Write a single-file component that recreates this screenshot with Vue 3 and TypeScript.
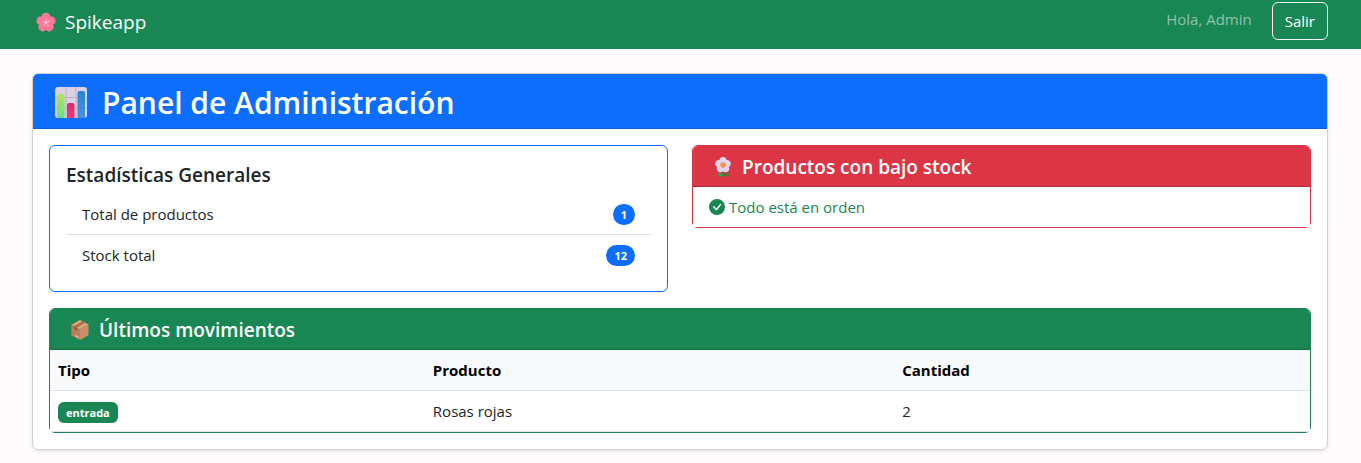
<script setup lang="ts">
interface Stat {
  label: string
  value: number
}

interface Movement {
  type: string
  product: string
  quantity: number
}

const stats: Stat[] = [
  { label: 'Total de productos', value: 1 },
  { label: 'Stock total', value: 12 },
]

const movements: Movement[] = [{ type: 'entrada', product: 'Rosas rojas', quantity: 2 }]

const petals: number[] = [0, 72, 144, 216, 288]
</script>

<template>
  <div class="page">
    <nav class="navbar">
      <a class="brand" href="#">
        <svg class="brand-icon" viewBox="0 0 20 20" aria-hidden="true">
          <g v-for="angle in petals" :key="angle" :transform="`rotate(${angle} 10 10.5)`">
            <path
              d="M10 11C6.500 9 5 5.500 6 3.200C6.800 1.300 8.500 0.600 9.400 0.800L10 1.400L10.600 0.800C11.500 0.600 13.200 1.300 14 3.200C15 5.500 13.500 9 10 11Z"
              fill="#ff7896"
            />
            <path d="M10 10.500L12.800 6.400" stroke="#f0527f" stroke-width="0.800" />
          </g>
          <circle cx="10" cy="10.500" r="2.200" fill="#f4608c" />
          <g v-for="angle in petals" :key="angle" :transform="`rotate(${angle} 10 10.500)`">
            <path d="M10 10.500V7.200" stroke="#ffd3ea" stroke-width="0.900" stroke-linecap="round" />
          </g>
          <circle cx="10" cy="10.500" r="1" fill="#ffe3f2" />
        </svg>
        Spikeapp
      </a>
      <div class="session">
        <span class="greeting">Hola, Admin</span>
        <button class="logout" type="button">Salir</button>
      </div>
    </nav>

    <main class="content">
      <section class="panel">
        <header class="panel-header">
          <svg class="panel-icon" viewBox="0 0 32 32" aria-hidden="true">
            <defs>
              <linearGradient id="bar-green" x1="0" y1="0" x2="0" y2="1">
                <stop offset="0" stop-color="#b5e35d" />
                <stop offset="1" stop-color="#68df8b" />
              </linearGradient>
              <linearGradient id="bar-pink" x1="0" y1="0" x2="0" y2="1">
                <stop offset="0" stop-color="#d52b68" />
                <stop offset="1" stop-color="#f4377d" />
              </linearGradient>
              <linearGradient id="bar-blue" x1="0" y1="0" x2="0" y2="1">
                <stop offset="0" stop-color="#2687d5" />
                <stop offset="1" stop-color="#4a91d8" />
              </linearGradient>
            </defs>
            <rect width="32" height="31" rx="3" fill="#d9d2e2" />
            <path d="M11 0V31M21 0V31M0 10.500H32M0 21H32" stroke="#bdb4c7" stroke-width="1" />
            <path d="M2 31V9Q2 7 4 7H7.500Q9.500 7 9.500 9V31Z" fill="url(#bar-green)" />
            <path d="M12 31V18Q12 16 14 16H17.500Q19.500 16 19.500 18V31Z" fill="url(#bar-pink)" />
            <path d="M22.500 31V6Q22.500 4 24.500 4H28Q30 4 30 6V31Z" fill="url(#bar-blue)" />
          </svg>
          <h1 class="panel-title">Panel de Administración</h1>
        </header>

        <div class="panel-body">
          <div class="row">
            <section class="card card-primary stats">
              <h2 class="card-title">Estadísticas Generales</h2>
              <ul class="stat-list">
                <li v-for="stat in stats" :key="stat.label" class="stat">
                  <span>{{ stat.label }}</span>
                  <span class="badge pill">{{ stat.value }}</span>
                </li>
              </ul>
            </section>

            <section class="card card-danger">
              <header class="card-header">
                <svg class="card-icon" viewBox="0 0 20 20" aria-hidden="true">
                  <path d="M10 12V19" stroke="#3c8a35" stroke-width="1.600" />
                  <path d="M10 19.500C7.500 20 4.500 19 4.200 16.300C7 15.400 9.500 16.500 10 19.500Z" fill="#3f9a3c" />
                  <path d="M10 19.500C12.500 20 15.500 19 15.800 16.300C13 15.400 10.500 16.500 10 19.500Z" fill="#358234" />
                  <g v-for="angle in petals" :key="angle" :transform="`rotate(${angle} 10 8)`">
                    <ellipse cx="10" cy="3.900" rx="3.600" ry="3.900" fill="#e3d5f1" />
                    <path d="M10 8L12.500 4.500" stroke="#c9b3de" stroke-width="0.500" />
                  </g>
                  <circle cx="10" cy="8" r="2.700" fill="#f58b3b" />
                  <circle cx="9.500" cy="7.500" r="1.300" fill="#ffa04c" />
                </svg>
                <h2 class="header-title">Productos con bajo stock</h2>
              </header>
              <p class="status">
                <svg class="status-icon" viewBox="0 0 16 16" aria-hidden="true">
                  <path
                    fill="currentColor"
                    d="M16 8A8 8 0 1 1 0 8a8 8 0 0 1 16 0m-3.970-3.030a.750.750 0 0 0-1.080.022L7.477 9.417 5.384 7.323a.750.750 0 0 0-1.060 1.060L6.970 11.030a.750.750 0 0 0 1.079-.020l3.992-4.990a.750.750 0 0 0-.010-1.050z"
                  />
                </svg>
                Todo está en orden
              </p>
            </section>
          </div>

          <section class="card card-success">
            <header class="card-header">
              <svg class="card-icon" viewBox="0 0 20 20" aria-hidden="true">
                <path d="M10 0L18.500 4.500L10 9.500L1.300 4.800Z" fill="#dca678" />
                <path d="M1.300 4.800L10 9.500V20L2 15.800Q1.300 15.400 1.300 14.500Z" fill="#b97f5c" />
                <path d="M18.500 4.500L10 9.500V20L17.800 15.500Q18.500 15 18.500 14.200Z" fill="#cf8e68" />
                <path d="M12.500 1.300L15 2.700L6.800 7.800L4 6.300Z" fill="#a66e4d" />
                <path d="M4 6.300L6.800 7.800V11L4 9.500Z" fill="#935c40" />
                <path d="M5.500 15L8.500 16.500V18L5.500 16.500Z" fill="#dfc3cf" />
              </svg>
              <h2 class="header-title">Últimos movimientos</h2>
            </header>
            <table class="table">
              <colgroup>
                <col class="col-type" />
                <col class="col-product" />
                <col />
              </colgroup>
              <thead>
                <tr>
                  <th scope="col">Tipo</th>
                  <th scope="col">Producto</th>
                  <th scope="col">Cantidad</th>
                </tr>
              </thead>
              <tbody>
                <tr v-for="movement in movements" :key="movement.product">
                  <td><span class="badge tag">{{ movement.type }}</span></td>
                  <td>{{ movement.product }}</td>
                  <td>{{ movement.quantity }}</td>
                </tr>
              </tbody>
            </table>
          </section>
        </div>
      </section>
    </main>
  </div>
</template>

<style>
body {
  margin: 0;
  background: #fffafb;
}
</style>

<style scoped>
.page {
  color: #212529;
  font-family: 'Segoe UI', 'Open Sans', 'Noto Sans', sans-serif;
  font-size: 15px;
  line-height: 24px;
}

.page *,
.page *::before {
  box-sizing: border-box;
}

h1,
h2,
p,
ul {
  margin: 0;
  padding: 0;
}

.navbar {
  display: flex;
  align-items: center;
  justify-content: space-between;
  padding: 2px 33px 9px 36px;
  background: #198754;
}

.brand {
  display: flex;
  align-items: center;
  gap: 9px;
  padding-top: 2px;
  color: #fff;
  font-size: 19px;
  text-decoration: none;
}

.brand-icon {
  width: 20px;
  height: 20px;
}

.session {
  display: flex;
  align-items: flex-start;
  gap: 20px;
}

.greeting {
  padding-top: 5px;
  color: rgba(255, 255, 255, 0.5);
}

.logout {
  height: 38px;
  padding: 0 12px;
  border: 1px solid #f8f9fa;
  border-radius: 6px;
  background: transparent;
  color: #fff;
  font: inherit;
}

.content {
  padding: 24px 33px 13px 32px;
}

.panel {
  border: 1px solid #d2d0d1;
  border-radius: 6px;
  background: #fff;
  box-shadow: 0 2px 4px rgba(0, 0, 0, 0.075);
}

.panel-header {
  display: flex;
  align-items: center;
  gap: 15px;
  padding: 10px 22px 6px;
  border-bottom: 1px solid #0b5ed7;
  border-radius: 5px 5px 0 0;
  background: #0d6efd;
  color: #fff;
}

.panel-icon {
  width: 32px;
  height: 32px;
}

.panel-title {
  font-size: 30px;
  font-weight: 600;
  line-height: 38px;
}

.panel-body {
  display: grid;
  gap: 16px;
  padding: 16px;
}

.row {
  display: grid;
  grid-template-columns: 1fr 1fr;
  align-items: start;
  gap: 24px;
}

.card {
  border: 1px solid;
  border-radius: 6px;
  background: #fff;
}

.card-primary {
  border-color: #0d6efd;
}

.card-danger {
  border-color: #dc3545;
}

.card-success {
  border-color: #198754;
}

.stats {
  padding: 17px 16px 16px;
}

.card-title,
.header-title {
  font-size: 19px;
  font-weight: 600;
  line-height: 24px;
}

.stat-list {
  margin-top: 7px;
  list-style: none;
}

.stat {
  display: flex;
  align-items: center;
  justify-content: space-between;
  padding: 8px 16px;
}

.stat + .stat {
  border-top: 1px solid #dee2e6;
}

.badge {
  display: inline-block;
  padding: 4px 8px;
  color: #fff;
  font-size: 11px;
  font-weight: 700;
  line-height: 13px;
}

.pill {
  border-radius: 11px;
  background: #0d6efd;
}

.tag {
  border-radius: 6px;
  background: #198754;
}

.card-header {
  display: flex;
  align-items: center;
  gap: 9px;
  padding: 9px 20px 7px;
  border-bottom: 1px solid;
  border-radius: 5px 5px 0 0;
}

.card-danger .card-header {
  border-color: #b02d3b;
  background: #dc3545;
}

.card-success .card-header {
  border-color: #146c43;
  background: #198754;
}

.header-title {
  color: #fff;
}

.card-icon {
  width: 20px;
  height: 20px;
}

.status {
  display: flex;
  align-items: center;
  gap: 4px;
  padding: 8px 16px;
  background: #fff;
  color: #198754;
}

.status-icon {
  width: 16px;
  height: 16px;
}

.table {
  width: 100%;
  border-collapse: separate;
  border-spacing: 0;
  table-layout: fixed;
  text-align: left;
}

.col-type {
  width: 29.75%;
}

.col-product {
  width: 37.25%;
}

.table th,
.table td {
  height: 41px;
  padding: 0 8px;
  border-bottom: 1px solid #dee2e6;
  background: #fff;
}

.table th {
  background: #f8f9fa;
  color: #000;
  font-weight: 700;
}
</style>
